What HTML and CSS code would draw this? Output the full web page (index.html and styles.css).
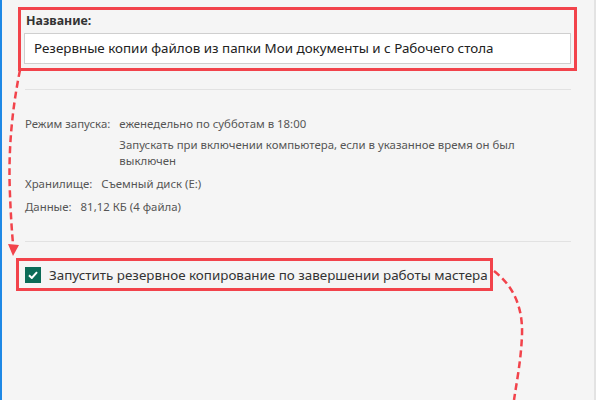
FILE: index.html
```html
<!DOCTYPE html>
<html lang="ru">
<head>
  <meta charset="UTF-8">
  <title>Мастер резервного копирования</title>
  <link rel="stylesheet" href="styles.css">
</head>
<body>
  <div class="window">
    <div class="highlight name-box">
      <div class="field-label">Название:</div>
      <div class="name-input">Резервные копии файлов из папки Мои документы и с Рабочего стола</div>
    </div>

    <div class="summary">
      <div class="row">
        <span class="key">Режим запуска:</span>
        <div class="values">
          <div>еженедельно по субботам в 18:00</div>
          <div class="sub">Запускать при включении компьютера, если в указанное время он был выключен</div>
        </div>
      </div>
      <div class="row">
        <span class="key">Хранилище:</span>
        <span class="val">Съемный диск (E:)</span>
      </div>
      <div class="row">
        <span class="key">Данные:</span>
        <span class="val">81,12 КБ (4 файла)</span>
      </div>
    </div>

    <label class="highlight run-box">
      <span class="checkbox">
        <svg width="10" height="8" viewBox="0 0 10 8"><path d="M1 4.2 L3.8 7 L9 1.2" fill="none" stroke="#fff" stroke-width="2"/></svg>
      </span>
      Запустить резервное копирование по завершении работы мастера
    </label>

    <svg class="arrows" width="596" height="400" viewBox="0 0 596 400">
      <path d="M20 70 C 12 110, 8 150, 10 195 C 11 220, 12 232, 13 244" />
      <polygon points="8,244 19,245 13,256" />
      <path d="M494 271 C 512 285, 523 305, 522 335 C 521 360, 517 380, 514 400" />
    </svg>
  </div>
</body>
</html>
```

FILE: styles.css
```css
body {
  margin: 0;
  font-family: "Noto Sans", "Open Sans", sans-serif;
  background: #f5f5f5;
}

.window {
  position: relative;
  width: 596px;
  height: 400px;
  box-sizing: border-box;
  border-left: 2px solid #1e88e5;
  border-right: 2px solid #e3e3e3;
  padding-top: 7px;
  overflow: hidden;
}

.highlight {
  border: 3px solid #f2434b;
  box-sizing: border-box;
}

.name-box {
  width: 559px;
  margin-left: 16px;
  padding: 2px 3px 4px 3px;
}

.field-label {
  font-size: 12.4px;
  font-weight: bold;
  line-height: 18px;
  color: #333;
  margin: 0 0 3px 2px;
}

.name-input {
  height: 31px;
  box-sizing: border-box;
  border: 1px solid #cfcfcf;
  background: #fff;
  padding: 0 9px;
  font-size: 13.4px;
  line-height: 29px;
  color: #222;
  white-space: nowrap;
}

.summary {
  margin: 18px 0 0 23px;
  width: 546px;
  border-top: 1px solid #e2e2e2;
  border-bottom: 1px solid #e2e2e2;
  padding: 26px 0 26px;
  font-size: 11.4px;
  line-height: 16px;
  color: #555;
}

.row {
  display: flex;
  gap: 9px;
}

.row + .row {
  margin-top: 7px;
}

.values {
  width: 400px;
}

.values .sub {
  margin-top: 5px;
}

.run-box {
  display: flex;
  align-items: center;
  gap: 8px;
  width: 477px;
  height: 33px;
  margin: 16px 0 0 14px;
  padding-left: 6px;
  font-size: 13.4px;
  color: #333;
  white-space: nowrap;
}

.checkbox {
  width: 16px;
  height: 16px;
  background: #0b6b57;
  display: flex;
  align-items: center;
  justify-content: center;
}

.arrows {
  position: absolute;
  top: 0;
  left: -2px;
  pointer-events: none;
}

.arrows path {
  fill: none;
  stroke: #f2434b;
  stroke-width: 2.5;
  stroke-dasharray: 7 4;
}

.arrows polygon {
  fill: #f2434b;
}
```
